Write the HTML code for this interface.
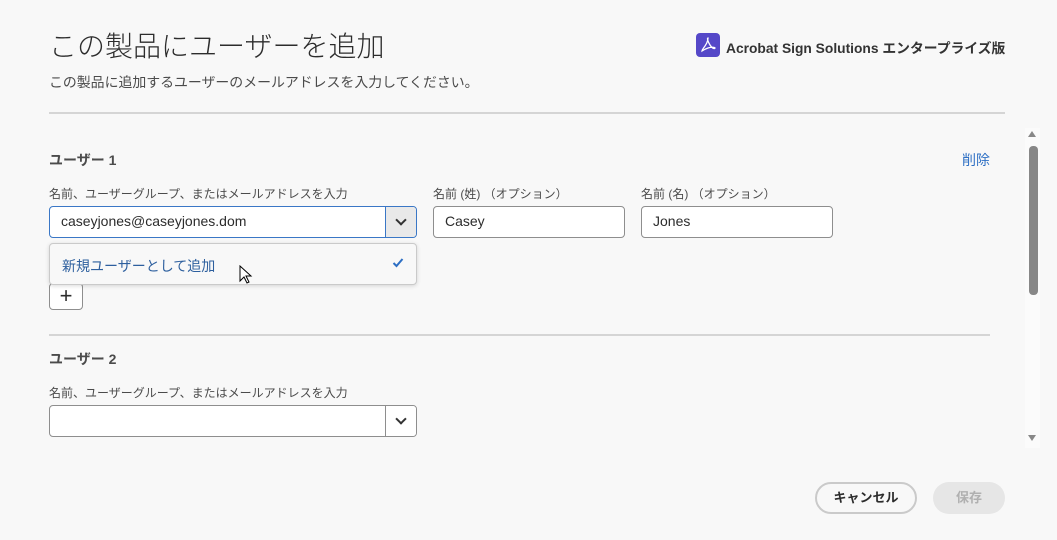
<!DOCTYPE html>
<html><head><meta charset="utf-8"><style>
*{box-sizing:border-box;margin:0;padding:0}
body{width:1057px;height:540px;background:#f8f8f8;font-family:"Liberation Sans","Noto Sans CJK JP",sans-serif;color:#2c2c2c;position:relative;overflow:hidden}
.a{position:absolute;white-space:nowrap}
.lbl{font-size:12px;color:#4b4b4b}
.inp{position:absolute;height:32px;background:#fff;border:1px solid #8e8e8e;border-radius:4px;font-size:14px;padding:6px 11px;color:#2c2c2c}
.btn{position:absolute;background:#e9e9e9;border-left:1px solid #8e8e8e}
.chev{position:absolute;left:11px;top:11px;width:8px;height:8px;border-right:2px solid #333;border-bottom:2px solid #333;transform:rotate(45deg);}
</style></head><body>
<div class="a" style="left:49px;top:25px;font-size:28px;color:#2c2c2c;font-weight:300">この製品にユーザーを追加</div>
<div class="a" style="left:696px;top:33px;width:24px;height:24px;background:#5548c8;border-radius:4px">
<svg width="24" height="24" viewBox="0 0 24 24"><path d="M12 5c-1 0-0.5 3 2 7s5 4 5 3-4-1-7 0-6 3-6 3 0-1 3-5 3-8 3-8z" fill="none" stroke="#fff" stroke-width="1.3"/></svg></div>
<div class="a" style="left:726px;top:37px;font-size:13.8px;font-weight:bold;color:#333">Acrobat Sign Solutions エンタープライズ版</div>
<div class="a" style="left:49px;top:72px;font-size:13.9px;color:#4b4b4b">この製品に追加するユーザーのメールアドレスを入力してください。</div>
<div class="a" style="left:49px;top:112px;width:956px;height:2px;background:#d5d5d5"></div>

<div class="a" style="left:49px;top:150px;font-size:14px;font-weight:bold;color:#4b4b4b">ユーザー 1</div>
<div class="a" style="left:962px;top:150px;font-size:14px;color:#2d6fc4">削除</div>
<div class="a lbl" style="left:49px;top:185px">名前、ユーザーグループ、またはメールアドレスを入力</div>
<div class="a lbl" style="left:433px;top:185px">名前 (姓) （オプション）</div>
<div class="a lbl" style="left:641px;top:185px">名前 (名) （オプション）</div>
<div class="inp" style="left:49px;top:206px;width:368px;border-color:#3a77c6;">caseyjones@caseyjones.dom
<div class="btn" style="left:335px;top:0;width:31px;height:30px;border-left-color:#3a77c6;border-radius:0 3px 3px 0"><div class="chev" style="left:11px;top:9px"></div></div></div>
<div class="inp" style="left:433px;top:206px;width:192px">Casey</div>
<div class="inp" style="left:641px;top:206px;width:192px">Jones</div>

<div class="a" style="left:49px;top:283px;width:34px;height:27px;border:1px solid #8e8e8e;border-radius:4px;background:#fff;font-size:22px;text-align:center;line-height:23px">+</div>
<div class="a" style="left:49px;top:243px;width:368px;height:42px;background:#f8f8f8;border:1px solid #cacaca;border-radius:4px;box-shadow:0 1px 4px rgba(0,0,0,.15)">
<div class="a" style="left:12px;top:12px;font-size:14px;color:#2d5f9e">新規ユーザーとして追加</div>
<svg class="a" style="left:342px;top:14px" width="12" height="10" viewBox="0 0 12 10"><path d="M1.5 5l3 3 6-7" fill="none" stroke="#2d6fc4" stroke-width="2"/></svg></div>
<svg class="a" style="left:239px;top:265px" width="14" height="20" viewBox="0 0 14 20"><path d="M1 1v15l4-4 3 6 2-1-3-6h5z" fill="#fff" stroke="#000" stroke-width="1"/></svg>

<div class="a" style="left:49px;top:334px;width:941px;height:2px;background:#d5d5d5"></div>
<div class="a" style="left:49px;top:349px;font-size:14px;font-weight:bold;color:#4b4b4b">ユーザー 2</div>
<div class="a lbl" style="left:49px;top:384px">名前、ユーザーグループ、またはメールアドレスを入力</div>
<div class="inp" style="left:49px;top:405px;width:368px">
<div class="btn" style="left:335px;top:0;width:31px;height:30px;background:#fff;border-radius:0 3px 3px 0"><div class="chev" style="left:11px;top:9px"></div></div></div>

<div class="a" style="left:1025px;top:128px;width:15px;height:320px;background:#fbfbfb"></div>
<div class="a" style="left:1028px;top:131px;width:0;height:0;border:4px solid transparent;border-bottom:6px solid #888;border-top:0"></div>
<div class="a" style="left:1029px;top:146px;width:9px;height:149px;background:#888;border-radius:4px"></div>
<div class="a" style="left:1028px;top:435px;width:0;height:0;border:4px solid transparent;border-top:6px solid #888;border-bottom:0"></div>

<div class="a" style="left:815px;top:482px;width:102px;height:32px;border:2px solid #cacaca;border-radius:16px;background:#f8f8f8;font-size:13px;font-weight:bold;text-align:center;line-height:28px;color:#2c2c2c">キャンセル</div>
<div class="a" style="left:933px;top:482px;width:72px;height:32px;border-radius:16px;background:#e6e6e6;font-size:13px;font-weight:bold;text-align:center;line-height:32px;color:#b0b0b0">保存</div>
</body></html>
